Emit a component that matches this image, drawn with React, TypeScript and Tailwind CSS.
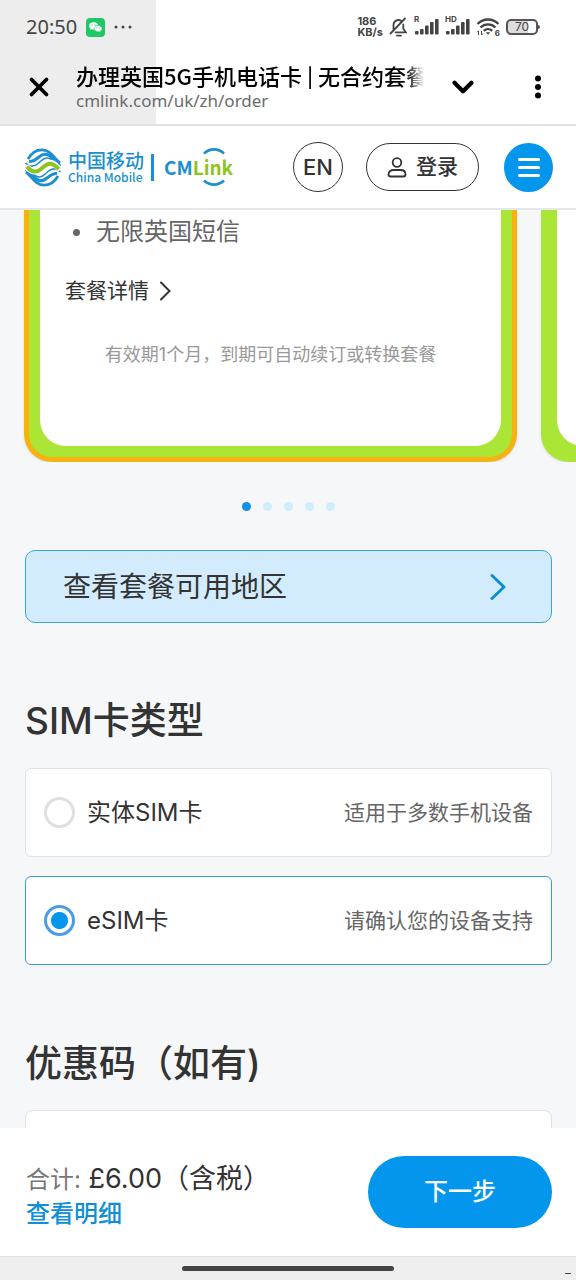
import { useState } from "react";
import { ChevronDown, X } from "lucide-react";

const simTypes = [
  { id: "physical", name: "实体SIM卡", hint: "适用于多数手机设备" },
  { id: "esim", name: "eSIM卡", hint: "请确认您的设备支持" },
];

const slides = [0, 1, 2, 3, 4];

function WeChatIcon() {
  return (
    <svg width="19" height="19" viewBox="0 0 19 19" aria-hidden="true">
      <rect width="19" height="19" rx="4" fill="#1fc866" />
      <path d="M7.6 4.2C5 4.2 3 5.8 3 7.8c0 1.200.7 2.200 1.700 2.900l-.4 1.400 1.600-.8c.5.200 1.100.2 1.700.2 2.600 0 4.600-1.600 4.600-3.700S10.200 4.200 7.600 4.200z" fill="#fff" />
      <path d="M12 7.400c-2.200 0-4 1.400-4 3.200s1.800 3.200 4 3.200c.5 0 .9 0 1.300-.2l1.400.8-.3-1.300c1-.6 1.600-1.500 1.600-2.500 0-1.800-1.800-3.200-4-3.200z" fill="#fff" stroke="#1fc866" strokeWidth=".6" />
      <circle cx="6.100" cy="6.900" r=".6" fill="#1fc866" />
      <circle cx="9.100" cy="6.900" r=".6" fill="#1fc866" />
      <circle cx="10.800" cy="9.900" r=".5" fill="#1fc866" />
      <circle cx="13.300" cy="9.900" r=".5" fill="#1fc866" />
    </svg>
  );
}

function BellOffIcon() {
  return (
    <svg width="19" height="20" viewBox="0 0 19 20" fill="none" stroke="#444" strokeWidth="1.800" strokeLinecap="round" aria-hidden="true">
      <path d="M4.500 12V8.200a5 5 0 0 1 7.800-4.300M14.300 7.500v4.200l2.500 3.600H6.500M1.500 16.500 16 1.500" />
      <path d="M8 18.600h4" />
    </svg>
  );
}

function SignalIcon({ label }: { label: string }) {
  return (
    <span className="relative flex">
      <span className="absolute -top-1 left-0 text-[8px] leading-[12px] font-bold">{label}</span>
      <svg width="25" height="20" viewBox="0 0 25 20" fill="#444" aria-hidden="true">
        <rect x="1" y="14" width="3.600" height="3.500" rx="1" />
        <rect x="6" y="12" width="3.600" height="5.500" rx="1" />
        <rect x="11" y="8.500" width="3.600" height="9" rx="1" />
        <rect x="16" y="5" width="3.600" height="12.500" rx="1" />
        <rect x="21" y="2" width="3.600" height="15.500" rx="1" />
      </svg>
    </span>
  );
}

function WifiIcon() {
  return (
    <span className="relative flex">
      <svg width="24" height="20" viewBox="0 0 24 20" fill="none" stroke="#444" strokeWidth="2.400" aria-hidden="true">
        <path d="M1.500 7C7.500 1 16.500 1 22.500 7M4.500 10.500c4.300-4.200 10.700-4.200 15 0M7.800 13.800c2.400-2.300 6-2.300 8.400 0" />
        <path d="M9.800 15.200h4.400L12 17.800z" fill="#444" stroke="none" />
        <path d="M2.500 18v-4M1.200 15.200l1.300-1.400M5.500 14v4M6.800 16.600l-1.300 1.400" strokeWidth="1" />
      </svg>
      <span className="absolute right-0 bottom-0 text-[8px] leading-[8px] font-bold">6</span>
    </span>
  );
}

function MobileMark() {
  return (
    <svg width="38" height="39" viewBox="0 0 38 39" fill="none" aria-hidden="true">
      <g stroke="#1b8fd0">
        <path d="M4 11C8 4 13 1.800 18 1.800c8 0 12 8 18 13.200" strokeWidth="2.800" />
        <path d="M5 13.500c4 .5 7-2 10-4.500 5-4.400 9-3.500 13 1 3 3.500 5 6 8.500 8" strokeWidth="3" />
        <path d="M1.500 15c4.500 4.500 8.500 4 12.500.5 5-4.500 8-7.500 13-4 3.500 2.500 5.500 6.500 9.500 8.500" strokeWidth="1.600" />
      </g>
      <g stroke="#1b8fd0" transform="rotate(180 19 19.500)">
        <path d="M4 11C8 4 13 1.800 18 1.800c8 0 12 8 18 13.200" strokeWidth="2.800" />
        <path d="M5 13.500c4 .5 7-2 10-4.500 5-4.400 9-3.500 13 1 3 3.500 5 6 8.500 8" strokeWidth="3" />
        <path d="M1.500 15c4.500 4.500 8.500 4 12.500.5 5-4.500 8-7.500 13-4 3.500 2.500 5.500 6.500 9.500 8.500" strokeWidth="1.600" />
      </g>
      <path d="M2 18c5 6 10 7 15 3 5-4.500 8-7.500 12-5.500 3 1.500 4 4 7 5.500" stroke="#fff" strokeWidth="6" />
      <path d="M3 18.500c4.500 6 9.500 6.500 14 2.500 5-4.500 8-6.500 12-4.500 2.500 1.200 4 3 6 4.500" stroke="#8fc31f" strokeWidth="4" />
    </svg>
  );
}

function Logo() {
  return (
    <a href="#" className="flex items-center font-['Noto_Sans_CJK_SC',sans-serif] text-[#1b8fd0]">
      <MobileMark />
      <span className="ml-[6px] flex flex-col">
        <span className="text-[19px] leading-[19px] font-medium">中国移动</span>
        <span className="text-[12px] leading-[15px] font-medium">China Mobile</span>
      </span>
      <span className="mr-[10px] ml-[7px] h-[27px] w-[3px] bg-[#1b8fd0]" />
      <span className="relative text-[19px] leading-[40px] font-bold">
        CM<span className="text-[#8fc31f]">Link</span>
        <svg className="absolute top-0 left-[38px]" width="24" height="40" viewBox="0 0 24 40" fill="none" stroke="#1b8fd0" strokeWidth="2.800" aria-hidden="true">
          <path d="M2 6.500C8 1 16 1 22 6.500M2 33.500c6 5.500 14 5.500 20 0" />
        </svg>
      </span>
    </a>
  );
}

function StatusBar() {
  return (
    <div className="flex h-[54px] items-center justify-between pr-9 pl-[26px] text-[#444]">
      <div className="flex items-center gap-[9px]">
        <span className="font-['Noto_Sans'] text-[20px]">20:50</span>
        <WeChatIcon />
        <svg width="18" height="4" viewBox="0 0 18 4" fill="#444" aria-hidden="true">
          <circle cx="2" cy="2" r="1.500" />
          <circle cx="9" cy="2" r="1.500" />
          <circle cx="16" cy="2" r="1.500" />
        </svg>
      </div>
      <div className="flex items-center gap-[6px]">
        <span className="flex flex-col text-[11px] leading-[11px] font-bold">
          <span>186</span>
          <span>KB/s</span>
        </span>
        <BellOffIcon />
        <SignalIcon label="R" />
        <SignalIcon label="HD" />
        <WifiIcon />
        <span className="flex items-center">
          <span className="flex h-[16px] w-[32px] items-center justify-center rounded-[5px] border-2 border-[#555] bg-[linear-gradient(90deg,#ddd_70%,#fff_70%)] text-[12px] leading-[12px]">70</span>
          <span className="h-1 w-[2px] rounded-r bg-[#555]" />
        </span>
      </div>
    </div>
  );
}

function BrowserBar() {
  return (
    <div className="flex h-[70px] items-center px-6 pb-1 text-black">
      <button type="button" aria-label="关闭" className="flex">
        <X size={30} strokeWidth={3} />
      </button>
      <div className="ml-[22px] w-[348px]">
        <p className="overflow-hidden font-['Noto_Sans_CJK_SC',sans-serif] text-[22px] leading-[28px] font-medium whitespace-nowrap [mask-image:linear-gradient(90deg,#000_95%,transparent)]">
          办理英国5G手机电话卡 | 无合约套餐
        </p>
        <p className="font-['Noto_Sans'] text-[17px] leading-[24px] text-[#6b6b6b]">cmlink.com/uk/zh/order</p>
      </div>
      <button type="button" aria-label="展开" className="ml-[22px] flex">
        <ChevronDown size={34} strokeWidth={3} />
      </button>
      <button type="button" aria-label="更多" className="ml-auto flex w-[28px] justify-center">
        <svg width="8" height="24" viewBox="0 0 8 24" aria-hidden="true">
          <circle cx="4" cy="3.500" r="3" />
          <circle cx="4" cy="12" r="3" />
          <circle cx="4" cy="20.500" r="3" />
        </svg>
      </button>
    </div>
  );
}

export default function App() {
  const [sim, setSim] = useState("esim");
  const [slide, setSlide] = useState(0);

  return (
    <div className="flex h-screen flex-col overflow-hidden bg-[#f5f7f8] font-[Inter,'Noto_Sans_CJK_SC',sans-serif] text-[#333]">
      <header className="shrink-0 border-b-2 border-[#e2e2e2] bg-[linear-gradient(90deg,#ededed_27%,#fff_27%)]">
        <StatusBar />
        <BrowserBar />
      </header>

      {/* 站点导航 */}
      <nav className="flex h-[84px] shrink-0 items-center border-b-2 border-[#e6e7ea] bg-white pr-[23px] pl-6">
        <Logo />
        <button type="button" className="ml-auto h-[50px] w-[50px] rounded-full border border-[#333] text-[22px] font-medium">
          EN
        </button>
        <button type="button" className="ml-[23px] flex h-[48px] w-[113px] items-center justify-center gap-[9px] rounded-full border border-[#333] text-[21px] font-medium">
          <svg width="20" height="21" viewBox="0 0 20 21" fill="none" stroke="#333" strokeWidth="1.800" aria-hidden="true">
            <circle cx="10" cy="5.500" r="4.300" />
            <path d="M6.500 13h7c3 0 5 1.800 5 4.500 0 1.300-.8 2-2 2h-13c-1.200 0-2-.7-2-2C1.500 14.800 3.500 13 6.500 13z" />
          </svg>
          登录
        </button>
        <button type="button" aria-label="菜单" className="ml-[25px] flex h-[49px] w-[49px] flex-col items-center justify-center gap-[5px] rounded-full bg-[#0396ec]">
          <span className="h-[3px] w-[22px] rounded-full bg-white" />
          <span className="h-[3px] w-[22px] rounded-full bg-white" />
          <span className="h-[3px] w-[22px] rounded-full bg-white" />
        </button>
      </nav>

      <main className="flex-1 overflow-hidden">
        {/* 套餐轮播 */}
        <div className="flex gap-6 overflow-hidden pl-6">
          <section className="w-[493px] shrink-0 rounded-b-[28px] border-[5px] border-t-0 border-[#f7b20f] bg-[#abe535] px-[11px] pb-[11px] shadow-sm">
            <div className="h-[236px] rounded-b-[26px] bg-white px-[25px] pt-[5px]">
              <ul className="text-[24px] leading-[34px] text-[#666]">
                <li className="flex items-center gap-4 pl-2">
                  <span className="h-[7px] w-[7px] rounded-full bg-[#666]" />
                  无限英国短信
                </li>
              </ul>
              <a href="#" className="mt-[27px] flex items-center gap-[10px] text-[21px] leading-[30px]">
                套餐详情
                <svg width="12" height="20" viewBox="0 0 12 20" fill="none" stroke="#333" strokeWidth="2" strokeLinecap="round" aria-hidden="true">
                  <path d="M2 1.500 10.500 10 2 18.500" />
                </svg>
              </a>
              <p className="mt-[35px] text-center text-[18px] leading-[28px] text-[#999]">
                有效期1个月，到期可自动续订或转换套餐
              </p>
            </div>
          </section>
          <section className="w-[493px] shrink-0 rounded-b-[28px] bg-[#abe535] px-4 pb-4 shadow-sm">
            <div className="h-[236px] rounded-b-[26px] bg-white" />
          </section>
        </div>

        <div className="mt-[39px] flex h-[10px] items-center justify-center gap-[12px]">
          {slides.map((i) => (
            <button
              key={i}
              type="button"
              aria-label={`第${i + 1}页`}
              onClick={() => setSlide(i)}
              className={slide === i ? "h-[9px] w-[9px] rounded-full bg-[#0f90e6]" : "h-[9px] w-[9px] rounded-full bg-[#d0edfd]"}
            />
          ))}
        </div>

        <div className="pr-6 pl-[25px]">
          <a href="#" className="mt-[39px] flex h-[73px] items-center justify-between rounded-[10px] border border-[#3aa5d6] bg-[#d3ecfd] pr-[45px] pl-[37px] text-[28px]">
            查看套餐可用地区
            <svg width="16" height="28" viewBox="0 0 16 28" fill="none" stroke="#0c8ed4" strokeWidth="3" strokeLinecap="round" strokeLinejoin="round" aria-hidden="true">
              <path d="M2 2.500 14 14 2 25.500" />
            </svg>
          </a>

          {/* SIM卡类型 */}
          <h2 className="mt-[74px] text-[37px] leading-[48px] font-medium">SIM卡类型</h2>
          <div className="mt-[23px] flex flex-col gap-[19px]">
            {simTypes.map((t) => (
              <label
                key={t.id}
                className={
                  sim === t.id
                    ? "flex h-[89px] items-center rounded-[6px] border border-[#3a9bd0] bg-white px-[18px]"
                    : "flex h-[89px] items-center rounded-[6px] border border-[#e0e2e6] bg-white px-[18px]"
                }
              >
                <input
                  type="radio"
                  name="sim"
                  value={t.id}
                  checked={sim === t.id}
                  onChange={() => setSim(t.id)}
                  className="h-[31px] w-[31px] appearance-none rounded-full border-3 border-[#dedfe3] bg-white checked:border-[#4c9ce4] checked:bg-[radial-gradient(circle,#0396ec_8px,#fff_9px)]"
                />
                <span className="ml-3 text-[24px]">{t.name}</span>
                <span className="ml-auto text-[21px] text-[#666]">{t.hint}</span>
              </label>
            ))}
          </div>

          {/* 优惠码 */}
          <h2 className="mt-[75px] text-[37px] leading-[48px] font-medium">
            <label htmlFor="promo">优惠码（如有)</label>
          </h2>
          <input id="promo" type="text" className="mt-[22px] h-[74px] w-full rounded-[8px] border border-[#e0e2e6] bg-white px-5 text-[24px]" />
        </div>
      </main>

      {/* 底部结算栏 */}
      <footer className="shrink-0 bg-white">
        <div className="flex h-[128px] items-center justify-between pr-6 pl-[26px]">
          <div className="pt-[6px]">
            <p className="text-[27px] leading-[36px]">
              <span className="text-[24px] text-[#777]">合计:</span> £6.00（含税）
            </p>
            <a href="#" className="block text-[24px] leading-[32px] font-medium text-[#0f8fd8]">查看明细</a>
          </div>
          <button type="button" className="h-[72px] w-[184px] rounded-full bg-[#0396ec] text-[24px] font-medium text-white">
            下一步
          </button>
        </div>
        <div className="relative flex h-[24px] items-center justify-center border-t border-[#e2e2e2] bg-[#efefef]">
          <span className="h-[5px] w-[212px] rounded-full bg-[#444]" />
          <span className="absolute right-[5px] bottom-[6px] h-px w-[6px] bg-[#444]" />
        </div>
      </footer>
    </div>
  );
}
